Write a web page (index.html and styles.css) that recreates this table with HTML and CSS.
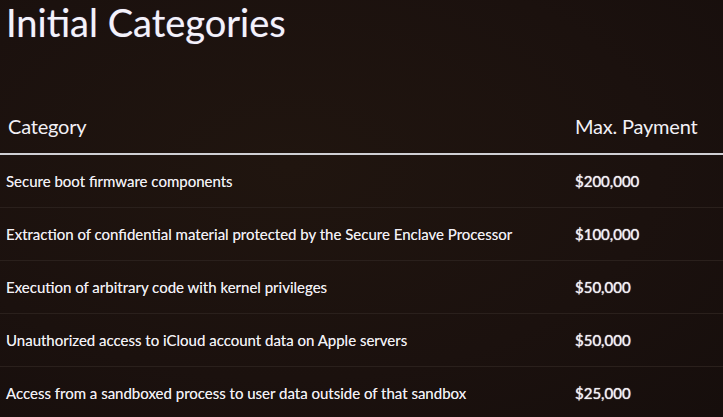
FILE: index.html
```html
<!DOCTYPE html>
<html lang="en">
<head>
    <meta charset="UTF-8">
    <meta name="viewport" content="width=device-width, initial-scale=1.0">
    <title>Initial Categories</title>
    <link rel="stylesheet" href="styles.css">
</head>
<body>
    <div class="slide">
        <h1>Initial Categories</h1>
        <table class="bounty">
            <thead>
                <tr>
                    <th class="cat">Category</th>
                    <th class="pay">Max. Payment</th>
                </tr>
            </thead>
            <tbody>
                <tr>
                    <td class="cat">Secure boot firmware components</td>
                    <td class="pay">$200,000</td>
                </tr>
                <tr>
                    <td class="cat">Extraction of confidential material protected by the Secure Enclave Processor</td>
                    <td class="pay">$100,000</td>
                </tr>
                <tr>
                    <td class="cat">Execution of arbitrary code with kernel privileges</td>
                    <td class="pay">$50,000</td>
                </tr>
                <tr>
                    <td class="cat">Unauthorized access to iCloud account data on Apple servers</td>
                    <td class="pay">$50,000</td>
                </tr>
                <tr>
                    <td class="cat">Access from a sandboxed process to user data outside of that sandbox</td>
                    <td class="pay">$25,000</td>
                </tr>
            </tbody>
        </table>
    </div>
</body>
</html>
```

FILE: styles.css
```css
html, body {
    margin: 0;
    padding: 0;
}
body {
    width: 723px;
    height: 417px;
    overflow: hidden;
    background: #1b110e;
    font-family: Lato, "Open Sans", sans-serif;
    color: #f2f0f6;
}
.slide {
    height: 417px;
    background: radial-gradient(ellipse at 40% 40%, #20150f 0%, #1b110e 60%, #160e0c 100%);
}
h1 {
    margin: 0;
    padding: 0 0 0 6px;
    font-size: 38px;
    font-weight: 400;
    line-height: 44px;
    color: #f4f2fa;
    text-shadow: 0 0 1px rgba(160, 160, 255, 0.5);
}
.bounty {
    width: 100%;
    margin-top: 54px;
    border-collapse: collapse;
}
.bounty th {
    font-weight: 400;
    font-size: 20px;
    letter-spacing: -0.2px;
    text-align: left;
    padding: 0 0 15px;
    border-bottom: 2px solid #cfcfd4;
    height: 40px;
    vertical-align: bottom;
}
.bounty th.cat {
    padding-left: 8px;
}
.bounty td {
    height: 52px;
    padding: 0;
    font-size: 15px;
    border-bottom: 1px solid #2a201c;
    vertical-align: middle;
    text-shadow: 0 0 0.6px rgba(255, 255, 255, 0.6);
}
.bounty td.cat {
    padding-left: 6px;
}
.bounty .pay {
    width: 148px;
}
.bounty td.pay {
    text-shadow: 0 0 1px #fff;
}
```
